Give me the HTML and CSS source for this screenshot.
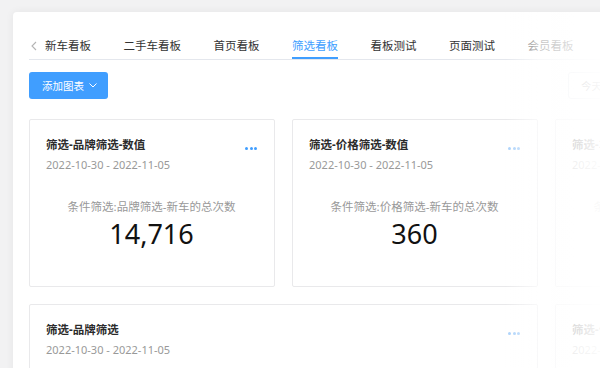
FILE: index.html
```html
<!DOCTYPE html>
<html lang="zh-CN">

<head>
    <meta charset="UTF-8">
    <meta name="viewport" content="width=device-width, initial-scale=1.0">
    <title>看板</title>
    <link rel="stylesheet" href="styles.css">
</head>

<body>
    <div class="panel">
        <!-- 看板标签 -->
        <div class="tabs">
            <span class="tab-prev">
                <svg width="6" height="10" viewBox="0 0 6 10"><path d="M5 1 1 5l4 4" fill="none" stroke="#b4b4b4" stroke-width="1.1"/></svg>
            </span>
            <span class="tab">新车看板</span>
            <span class="tab">二手车看板</span>
            <span class="tab">首页看板</span>
            <span class="tab active">筛选看板</span>
            <span class="tab">看板测试</span>
            <span class="tab">页面测试</span>
            <span class="tab">会员看板</span>
        </div>
        <!-- 工具栏 -->
        <div class="toolbar">
            <button class="btn-add">添加图表
                <svg width="8" height="5" viewBox="0 0 8 5"><path d="M.5.5 4 4 7.5.5" fill="none" stroke="#fff" stroke-width="1"/></svg>
            </button>
            <div class="date-group">
                <button class="btn-date">今天</button>
                <button class="btn-date">昨天</button>
            </div>
        </div>
        <!-- 图表卡片 -->
        <div class="cards">
            <div class="card">
                <div class="card-head">
                    <div>
                        <div class="card-title">筛选-品牌筛选-数值</div>
                        <div class="card-date">2022-10-30 - 2022-11-05</div>
                    </div>
                    <span class="more"><i></i><i></i><i></i></span>
                </div>
                <div class="card-label">条件筛选:品牌筛选-新车的总次数</div>
                <div class="card-num">14,716</div>
            </div>
            <div class="card">
                <div class="card-head">
                    <div>
                        <div class="card-title">筛选-价格筛选-数值</div>
                        <div class="card-date">2022-10-30 - 2022-11-05</div>
                    </div>
                    <span class="more light"><i></i><i></i><i></i></span>
                </div>
                <div class="card-label">条件筛选:价格筛选-新车的总次数</div>
                <div class="card-num">360</div>
            </div>
            <div class="card">
                <div class="card-head">
                    <div>
                        <div class="card-title">筛选-车型筛选-数值</div>
                        <div class="card-date">2022-10-30 - 2022-11-05</div>
                    </div>
                    <span class="more light"><i></i><i></i><i></i></span>
                </div>
                <div class="card-label">条件筛选:车型筛选-新车的总次数</div>
                <div class="card-num">1,208</div>
            </div>
            <div class="card wide">
                <div class="card-head">
                    <div>
                        <div class="card-title">筛选-品牌筛选</div>
                        <div class="card-date">2022-10-30 - 2022-11-05</div>
                    </div>
                    <span class="more light"><i></i><i></i><i></i></span>
                </div>
            </div>
            <div class="card">
                <div class="card-head">
                    <div>
                        <div class="card-title">筛选-价格筛选</div>
                        <div class="card-date">2022-10-30 - 2022-11-05</div>
                    </div>
                    <span class="more light"><i></i><i></i><i></i></span>
                </div>
            </div>
        </div>
        <div class="fade"></div>
    </div>
</body>

</html>
```

FILE: styles.css
```css
body {
    margin: 0;
    background-color: #f2f2f3;
    overflow: hidden;
    font-family: "Noto Sans", "Noto Sans CJK SC", sans-serif;
    color: #333;
}

.panel {
    width: 820px;
    height: 420px;
    margin: 12px 0 0 13px;
    padding: 0 0 0 16px;
    background-color: #fff;
    border-radius: 4px 0 0 0;
    box-shadow: 0 0 8px 0 rgba(0, 0, 0, 0.06);
}

/* 标签 */
.tabs {
    display: flex;
    align-items: center;
    height: 26px;
    padding-top: 21px;
    border-bottom: 1px solid #e4e7ed;
    font-size: 11.5px;
}

.tab-prev {
    width: 16px;
    height: 26px;
    display: flex;
    align-items: center;
    padding-left: 2px;
    box-sizing: border-box;
}

.tab {
    height: 26px;
    line-height: 26px;
    margin-right: 32.5px;
    white-space: nowrap;
    box-sizing: border-box;
}

.tab.active {
    color: #409eff;
    box-shadow: inset 0 -2px 0 #409eff;
}

/* 工具栏 */
.toolbar {
    display: flex;
    margin-top: 12px;
}

.btn-add {
    width: 79px;
    height: 27px;
    border: none;
    border-radius: 3px;
    background-color: #409eff;
    color: #fff;
    font-family: inherit;
    font-size: 10.5px;
    display: flex;
    align-items: center;
    gap: 5px;
    padding: 0 0 0 13px;
}

.date-group {
    display: flex;
    margin-left: 460px;
}

.btn-date {
    height: 27px;
    padding: 0 12px;
    border: 1px solid #dcdfe6;
    background-color: #fff;
    color: #606266;
    font-family: inherit;
    font-size: 10.5px;
    border-radius: 3px 0 0 3px;
}

.btn-date + .btn-date {
    border-left: none;
    border-radius: 0 3px 3px 0;
}

/* 卡片 */
.cards {
    display: grid;
    grid-template-columns: repeat(3, 246px);
    gap: 17px;
    margin-top: 20px;
}

.card {
    height: 168px;
    box-sizing: border-box;
    border: 1px solid #e9e9eb;
    border-radius: 2px;
    padding: 16px 17px 0 16px;
}

.card.wide {
    grid-column: span 2;
}

.card-head {
    display: flex;
    justify-content: space-between;
}

.card-title {
    font-size: 11.5px;
    font-weight: 700;
    line-height: 18px;
    color: #2b2b2b;
}

.card-date {
    margin-top: 3px;
    font-size: 11px;
    line-height: 16px;
    color: #999;
}

.more {
    display: flex;
    gap: 1.5px;
    margin-top: 11px;
    height: 3px;
}

.more i {
    width: 3px;
    height: 3px;
    border-radius: 50%;
    background-color: #409eff;
}

.more.light i {
    background-color: #a8d0fb;
}

.card-label {
    margin-top: 26px;
    text-align: center;
    font-size: 11.5px;
    line-height: 16px;
    color: #999;
}

.card-num {
    margin-top: 3px;
    text-align: center;
    font-size: 27px;
    line-height: 32px;
    color: #111;
}

/* 右侧渐隐 */
.fade {
    position: fixed;
    top: 12px;
    right: 0;
    bottom: 0;
    width: 95px;
    pointer-events: none;
    background: linear-gradient(to right, rgba(255, 255, 255, 0) 0, rgba(255, 255, 255, 0.7) 35%, rgba(255, 255, 255, 0.95) 100%);
}
```
